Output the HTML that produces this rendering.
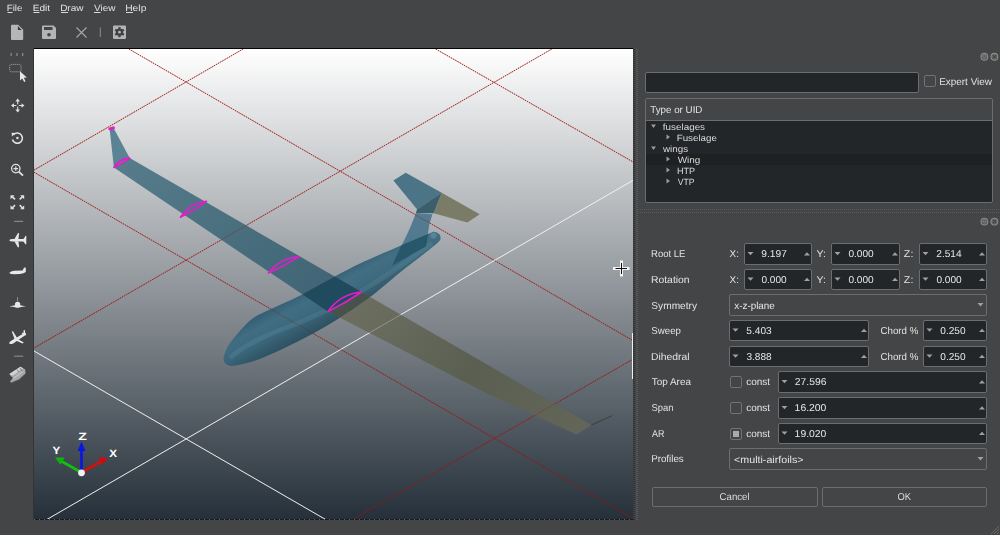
<!DOCTYPE html>
<html><head><meta charset="utf-8"><style>*{box-sizing:border-box;margin:0;padding:0}
html,body{width:1000px;height:535px;overflow:hidden;background:#444547;font-family:"Liberation Sans",sans-serif}
.a{position:absolute}</style></head>
<body>
<div class="a" style="left:33px;top:48px;width:600px;height:472px;background:#2a2c30"></div>
<div class="a" style="left:33px;top:48px;width:600px;height:1px;background:#050505"></div>
<div class="a" style="left:33px;top:48px;width:1px;height:472px;background:#333436"></div>
<div class="a" style="left:34px;top:519px;width:599px;height:1px;background:#141c2c"></div><div class="a" style="left:34px;top:519px;width:599px;height:1px;background-image:linear-gradient(90deg,#b07a30 30%,transparent 30%);background-size:5px 1px;opacity:0.7"></div>
<svg class="a" style="left:34px;top:49px" width="599" height="470" viewBox="34 49 599 470">
<defs>
<linearGradient id="bg" x1="0" y1="0" x2="0" y2="1">
<stop offset="0" stop-color="#ffffff"/>
<stop offset="1" stop-color="#25303a"/>
</linearGradient>
<linearGradient id="fus" gradientUnits="userSpaceOnUse" x1="316" y1="280" x2="339" y2="322">
<stop offset="0" stop-color="#2b586e"/>
<stop offset="0.3" stop-color="#3e6c82"/>
<stop offset="0.55" stop-color="#3a677c"/>
<stop offset="1" stop-color="#254b5b"/>
</linearGradient>
<linearGradient id="wb" gradientUnits="userSpaceOnUse" x1="120" y1="160" x2="340" y2="300">
<stop offset="0" stop-color="#4e7586"/>
<stop offset="0.6" stop-color="#406878"/>
<stop offset="1" stop-color="#3a6072"/>
</linearGradient>
<linearGradient id="wo" gradientUnits="userSpaceOnUse" x1="360" y1="300" x2="590" y2="430">
<stop offset="0" stop-color="#6a6d5d"/>
<stop offset="0.5" stop-color="#5a5e50"/>
<stop offset="1" stop-color="#646757"/>
</linearGradient>
<clipPath id="fclip"><path d="M223.6,360.0 C223.3,357.1 224.9,352.1 227.0,348.0 C229.1,343.9 231.8,340.3 236.0,335.5 C240.2,330.7 246.0,323.5 252.0,319.0 C258.0,314.5 264.3,312.4 272.2,308.6 C280.1,304.8 288.8,301.3 299.1,296.0 C309.4,290.7 323.9,282.4 334.0,277.0 C344.1,271.6 349.0,268.7 360.0,263.5 C371.0,258.3 388.5,251.0 400.0,246.0 C411.5,241.0 423.3,235.9 429.0,233.5 C434.7,231.1 432.3,231.7 434.0,231.8 C435.7,231.9 437.9,233.0 439.0,234.0 C440.1,235.0 440.7,236.6 440.5,238.0 C440.3,239.4 441.4,239.3 438.0,242.5 C434.6,245.7 426.3,252.0 420.0,257.0 C413.7,262.0 405.8,267.8 400.0,272.5 C394.2,277.2 390.0,280.9 385.0,285.0 C380.0,289.1 377.3,291.7 370.0,297.0 C362.7,302.3 350.6,310.9 341.0,317.0 C331.4,323.1 322.4,328.5 312.6,333.8 C302.8,339.1 291.6,344.5 282.3,348.9 C273.0,353.2 264.4,357.2 257.0,359.9 C249.6,362.6 242.7,364.1 238.0,365.0 C233.3,365.9 231.4,366.3 229.0,365.5 C226.6,364.7 223.9,362.9 223.6,360.0 Z"/></clipPath>
</defs>
<rect x="34" y="49" width="599" height="470" fill="url(#bg)"/>
<line x1="128.9" y1="49" x2="633" y2="340.6" stroke="#a01414" stroke-opacity="0.80" stroke-width="1" stroke-dasharray="1.6 0.9"/>
<line x1="34" y1="172.2" x2="633" y2="518.4" stroke="#a01414" stroke-opacity="0.80" stroke-width="1" stroke-dasharray="1.6 0.9"/>
<line x1="435.7" y1="49" x2="633" y2="161.9" stroke="#a01414" stroke-opacity="0.80" stroke-width="1" stroke-dasharray="1.6 0.9"/>
<line x1="243.1" y1="49" x2="34" y2="170.1" stroke="#a01414" stroke-opacity="0.80" stroke-width="1" stroke-dasharray="1.6 0.9"/>
<line x1="551.8" y1="49" x2="34" y2="348" stroke="#a01414" stroke-opacity="0.80" stroke-width="1" stroke-dasharray="1.6 0.9"/>
<line x1="633" y1="359.2" x2="352" y2="520" stroke="#a01414" stroke-opacity="0.80" stroke-width="1" stroke-dasharray="1.6 0.9"/>
<line x1="34" y1="351" x2="326.5" y2="520" stroke="#f2f2f2" stroke-opacity="0.90" stroke-width="1"/>
<line x1="633" y1="180.3" x2="46" y2="520" stroke="#f2f2f2" stroke-opacity="0.90" stroke-width="1"/>
<g id="plane">
<path d="M223.6,360.0 C223.3,357.1 224.9,352.1 227.0,348.0 C229.1,343.9 231.8,340.3 236.0,335.5 C240.2,330.7 246.0,323.5 252.0,319.0 C258.0,314.5 264.3,312.4 272.2,308.6 C280.1,304.8 288.8,301.3 299.1,296.0 C309.4,290.7 323.9,282.4 334.0,277.0 C344.1,271.6 349.0,268.7 360.0,263.5 C371.0,258.3 388.5,251.0 400.0,246.0 C411.5,241.0 423.3,235.9 429.0,233.5 C434.7,231.1 432.3,231.7 434.0,231.8 C435.7,231.9 437.9,233.0 439.0,234.0 C440.1,235.0 440.7,236.6 440.5,238.0 C440.3,239.4 441.4,239.3 438.0,242.5 C434.6,245.7 426.3,252.0 420.0,257.0 C413.7,262.0 405.8,267.8 400.0,272.5 C394.2,277.2 390.0,280.9 385.0,285.0 C380.0,289.1 377.3,291.7 370.0,297.0 C362.7,302.3 350.6,310.9 341.0,317.0 C331.4,323.1 322.4,328.5 312.6,333.8 C302.8,339.1 291.6,344.5 282.3,348.9 C273.0,353.2 264.4,357.2 257.0,359.9 C249.6,362.6 242.7,364.1 238.0,365.0 C233.3,365.9 231.4,366.3 229.0,365.5 C226.6,364.7 223.9,362.9 223.6,360.0 Z" fill="url(#fus)" fill-opacity="0.95"/>
<path d="M230,358 C243,346 263,336 291,326 C322,314 370,290 432,243" stroke="#6a9cb2" stroke-opacity="0.22" stroke-width="5" fill="none" clip-path="url(#fclip)"/>
<polygon points="410,228 416,213 432.4,214.3 429.3,224.6 426,246.3 392.3,265.4" fill="#43718a" fill-opacity="0.85"/>
<polygon points="392.3,265.4 401.3,245.2 428.2,234 426,246.3" fill="#235468" fill-opacity="0.9"/>
<polygon points="393.4,180.4 405.7,172.8 441.7,192.8 417,209.2" fill="#4b7487"/>
<polygon points="441.7,192.8 479.7,214.3 467.4,222.6 433.5,213.3" fill="#7a7c68"/>
<polygon points="417,209.2 441.7,192.8 433.5,213.3 416,213" fill="#3a5e6c"/>
<polygon points="109.6,128.5 113.4,127.8 129.7,158.1 113.9,167.5" fill="#5a8394"/>
<polygon points="113.9,167.5 129.7,158.1 361.5,292 327.9,311.6" fill="url(#wb)" fill-opacity="0.93"/>
<polygon points="113.9,167.5 129.7,158.1 361.5,292 327.9,311.6" fill="#0f3a50" fill-opacity="0.6" clip-path="url(#fclip)"/>
<polygon points="361.5,292 591.5,425 576.5,434.4 486,393 327.9,311.6" fill="url(#wo)" fill-opacity="0.95"/>
<polygon points="361.5,292 591.5,425 576.5,434.4 486,393 327.9,311.6" fill="#23333a" fill-opacity="0.45" clip-path="url(#fclip)"/>
<circle cx="433.5" cy="235.5" r="3" fill="#7fb0c6" fill-opacity="0.35"/>
<line x1="591.5" y1="425" x2="612" y2="415.7" stroke="#3a3f38" stroke-width="1"/>
</g>
<g opacity="0.55"><line x1="128.9" y1="49" x2="633" y2="340.6" stroke="#a01414" stroke-opacity="0.72" stroke-width="1" stroke-dasharray="1.6 0.9"/>
<line x1="34" y1="172.2" x2="633" y2="518.4" stroke="#a01414" stroke-opacity="0.72" stroke-width="1" stroke-dasharray="1.6 0.9"/>
<line x1="435.7" y1="49" x2="633" y2="161.9" stroke="#a01414" stroke-opacity="0.72" stroke-width="1" stroke-dasharray="1.6 0.9"/>
<line x1="243.1" y1="49" x2="34" y2="170.1" stroke="#a01414" stroke-opacity="0.72" stroke-width="1" stroke-dasharray="1.6 0.9"/>
<line x1="551.8" y1="49" x2="34" y2="348" stroke="#a01414" stroke-opacity="0.72" stroke-width="1" stroke-dasharray="1.6 0.9"/>
<line x1="633" y1="359.2" x2="352" y2="520" stroke="#a01414" stroke-opacity="0.72" stroke-width="1" stroke-dasharray="1.6 0.9"/>
<line x1="34" y1="351" x2="326.5" y2="520" stroke="#f2f2f2" stroke-opacity="0.50" stroke-width="1"/>
<line x1="633" y1="180.3" x2="46" y2="520" stroke="#f2f2f2" stroke-opacity="0.50" stroke-width="1"/></g>
<g fill="none" stroke="#e41ccc" stroke-width="1.6" stroke-linejoin="round">
<path d="M109.8,128.9 L113.4,127.9" stroke-width="3" stroke-linecap="round"/>
<path d="M113.9,167.5 Q119.2,158.5 129.7,158.1 Q122.4,163.8 113.9,167.5Z"/>
<path d="M180.4,217.2 Q189.8,203.3 206.5,201.3 Q194.2,210.5 180.4,217.2Z"/>
<path d="M268.5,273 Q280.0,257.8 299,256.7 Q284.5,266.2 268.5,273Z"/>
<path d="M327.9,311.6 Q340.2,294.0 361.5,292 Q345.5,303.1 327.9,311.6Z"/>
</g>
<g id="axes">
<line x1="81.5" y1="472" x2="81.5" y2="449" stroke="#0a14e6" stroke-width="2.6"/>
<polygon points="81.5,441.5 77.6,451 85.4,451" fill="#0a14e6"/>
<line x1="81.5" y1="472.5" x2="61" y2="461" stroke="#12c012" stroke-width="2.6"/>
<polygon points="55,457.6 64.6,457.4 60.4,464.8" fill="#12b012"/>
<line x1="81.5" y1="472.5" x2="102" y2="461" stroke="#d41010" stroke-width="2.6"/>
<polygon points="108,457.6 98.4,457.4 102.6,464.8" fill="#c80e0e"/>
<circle cx="81.5" cy="472.8" r="3.4" fill="#f2f2f2"/>
<g font-family="Liberation Sans" font-weight="bold" font-size="10.5" fill="#fff" text-rendering="geometricPrecision">
<text x="78.3" y="439.8" textLength="8.6" lengthAdjust="spacingAndGlyphs">Z</text>
<text x="52.6" y="453.8" textLength="7.8" lengthAdjust="spacingAndGlyphs">Y</text>
<text x="109.3" y="457.2" textLength="7.8" lengthAdjust="spacingAndGlyphs">X</text>
</g>
</g>
<rect x="632" y="333" width="1.5" height="46" fill="#f0f0f0"/>
<g stroke-linecap="square">
<path d="M621.5,262 L621.5,275 M614.5,268.5 L628,268.5" stroke="#f4f4f4" stroke-width="3"/>
<path d="M621.5,263 L621.5,274 M615.5,268.5 L627,268.5" stroke="#111" stroke-width="1" stroke-linecap="butt"/>
</g>
</svg>
<div class="a" style="left:633px;top:49px;width:2px;height:471px;background-image:linear-gradient(#303133 50%,transparent 50%);background-size:2px 2px"></div>
<div class="a" style="left:636px;top:49px;width:2px;height:471px;background-image:linear-gradient(#58595c 50%,transparent 50%);background-size:2px 2px"></div>
<div class="a" style="left:638px;top:209px;width:362px;height:1px;background-image:linear-gradient(90deg,#56575a 50%,transparent 50%);background-size:2px 1px"></div>
<div class="a" style="left:638px;top:212px;width:362px;height:1px;background-image:linear-gradient(90deg,#5a5b5e 50%,transparent 50%);background-size:2px 1px"></div>
<div class="a" style="left:645px;top:72px;width:274px;height:21px;background:#232629;border:1px solid #6b6d70;border-radius:2px;"></div><div class="a" style="left:924px;top:75px;width:12px;height:12px;background:#444547;border:1px solid #707274;border-radius:2px;"></div><div class="a" style="left:645px;top:98px;width:348px;height:105px;background:#232629;border:1px solid #6b6d70;border-radius:2px;"></div><div class="a" style="left:646px;top:99px;width:346px;height:22px;background:#444547;border-bottom:1px solid #6b6d70"></div><div class="a" style="left:646px;top:154px;width:346px;height:11px;background:#1f2022"></div><div class="a" style="left:744px;top:243px;width:68px;height:22px;background:#232629;border:1px solid #6b6d70;border-radius:2px;"></div><div class="a" style="left:831px;top:243px;width:69px;height:22px;background:#232629;border:1px solid #6b6d70;border-radius:2px;"></div><div class="a" style="left:919px;top:243px;width:68px;height:22px;background:#232629;border:1px solid #6b6d70;border-radius:2px;"></div><div class="a" style="left:744px;top:269px;width:68px;height:21px;background:#232629;border:1px solid #6b6d70;border-radius:2px;"></div><div class="a" style="left:831px;top:269px;width:69px;height:21px;background:#232629;border:1px solid #6b6d70;border-radius:2px;"></div><div class="a" style="left:919px;top:269px;width:68px;height:21px;background:#232629;border:1px solid #6b6d70;border-radius:2px;"></div><div class="a" style="left:729px;top:294px;width:258px;height:22px;background:#444547;border:1px solid #6b6d70;border-radius:2px;"></div><div class="a" style="left:729px;top:320px;width:140px;height:21px;background:#232629;border:1px solid #6b6d70;border-radius:2px;"></div><div class="a" style="left:923px;top:320px;width:64px;height:21px;background:#232629;border:1px solid #6b6d70;border-radius:2px;"></div><div class="a" style="left:729px;top:346px;width:140px;height:21px;background:#232629;border:1px solid #6b6d70;border-radius:2px;"></div><div class="a" style="left:923px;top:346px;width:64px;height:21px;background:#232629;border:1px solid #6b6d70;border-radius:2px;"></div><div class="a" style="left:730px;top:376px;width:12px;height:12px;background:#444547;border:1px solid #707274;border-radius:2px;"></div><div class="a" style="left:778px;top:371px;width:209px;height:22px;background:#232629;border:1px solid #6b6d70;border-radius:2px;"></div><div class="a" style="left:730px;top:402px;width:12px;height:12px;background:#444547;border:1px solid #707274;border-radius:2px;"></div><div class="a" style="left:778px;top:397px;width:209px;height:22px;background:#232629;border:1px solid #6b6d70;border-radius:2px;"></div><div class="a" style="left:730px;top:428px;width:12px;height:12px;background:#444547;border:1px solid #707274;border-radius:2px;"></div><div class="a" style="left:733px;top:431px;width:6px;height:6px;background:#a9a9a9"></div><div class="a" style="left:778px;top:423px;width:209px;height:21px;background:#232629;border:1px solid #6b6d70;border-radius:2px;"></div><div class="a" style="left:729px;top:448px;width:258px;height:22px;background:#444547;border:1px solid #6b6d70;border-radius:2px;"></div><div class="a" style="left:652px;top:487px;width:166px;height:20px;background:#444547;border:1px solid #6b6d70;border-radius:2px;"></div><div class="a" style="left:822px;top:487px;width:165px;height:20px;background:#444547;border:1px solid #6b6d70;border-radius:2px;"></div>
<svg class="a" style="left:0;top:0;will-change:transform" width="1000" height="535" viewBox="0 0 1000 535" font-family="Liberation Sans" text-rendering="geometricPrecision">

<!-- new file -->
<path d="M12,24.8 L18.2,24.8 L23.2,29.8 L23.2,39 Q23.2,40 22.2,40 L12,40 Q11,40 11,39 L11,25.8 Q11,24.8 12,24.8 Z" fill="#b6b6b6"/>
<path d="M17.9,26 L17.9,29.9 L21.6,29.9 Z" fill="#3a3b3d"/>
<!-- save -->
<path d="M42,26.5 Q42,25.5 43,25.5 L53.5,25.5 L56,28 L56,38 Q56,39 55,39 L43,39 Q42,39 42,38 Z" fill="#b4b4b4"/>
<rect x="44" y="27" width="8.5" height="3" fill="#444547"/>
<circle cx="49" cy="34.7" r="1.8" fill="#444547"/>
<!-- close X -->
<path d="M76.5,27.5 L86.5,37.5 M86.5,27.5 L76.5,37.5" stroke="#a8a8a8" stroke-width="1.1"/>
<rect x="99.8" y="27.5" width="1" height="9.5" fill="#7f8fa0"/>
<!-- settings -->
<rect x="113" y="25.5" width="13" height="13.5" rx="1.2" fill="#b4b4b4"/>
<g transform="translate(119.5,32.2)" fill="#3e3f41">
<circle r="3.6"/>
<rect x="-1.1" y="-5" width="2.2" height="10"/>
<rect x="-1.1" y="-5" width="2.2" height="10" transform="rotate(60)"/>
<rect x="-1.1" y="-5" width="2.2" height="10" transform="rotate(120)"/>
<circle r="1.4" fill="#b4b4b4"/>
</g>


<rect x="10.5" y="53" width="1.3" height="3" fill="#7d8b99"/>
<rect x="16.3" y="53" width="1.3" height="3" fill="#7d8b99"/>
<rect x="22" y="53" width="1.3" height="3" fill="#7d8b99"/>
<!-- select -->
<rect x="9.7" y="64.4" width="11.4" height="7.4" rx="1.5" fill="none" stroke="#b0b0b0" stroke-width="0.9" stroke-dasharray="1.1 0.9"/>
<path d="M20,71.2 L20,80.6 L22.3,78.4 L24.1,81.9 L25.5,81.2 L23.8,77.8 L26.8,77.6 Z" fill="#e6e6e6"/>
<!-- move -->
<g stroke="#e0e0e0" stroke-width="1.1" fill="#e0e0e0">
<path d="M12,105.5 L23.5,105.5 M17.7,99.5 L17.7,111.5" fill="none"/>
<path d="M17.7,98.5 L15.4,101.5 L20,101.5Z M17.7,112.5 L15.4,109.5 L20,109.5Z M11,105.5 L14,103.2 L14,107.8Z M24.5,105.5 L21.5,103.2 L21.5,107.8Z" stroke="none"/>
</g>
<circle cx="17.7" cy="105.5" r="1.3" fill="#444547"/>
<!-- rotate -->
<path d="M13.6,134.6 A5.1,5.1 0 1 1 12.4,139.6" fill="none" stroke="#e4e4e4" stroke-width="1.6"/>
<path d="M11.6,132.8 L15.6,133 L12,136.6Z" fill="#e4e4e4"/>
<circle cx="17.4" cy="138" r="1.2" fill="#e4e4e4"/>
<!-- zoom -->
<circle cx="15.8" cy="168.6" r="4.2" fill="none" stroke="#e0e0e0" stroke-width="1.3"/>
<path d="M13.5,168.6 L18.1,168.6 M15.8,166.3 L15.8,170.9" stroke="#e0e0e0" stroke-width="1.1"/>
<path d="M18.8,171.6 L23,175.6" stroke="#e0e0e0" stroke-width="2"/>
<!-- fit -->
<g fill="#e0e0e0">
<path d="M10.5,195.3 L14.5,195.3 L13.3,196.5 L15.6,198.8 L14.4,200 L12.1,197.7 L10.5,199.3Z"/>
<path d="M24.2,195.3 L20.2,195.3 L21.4,196.5 L19.1,198.8 L20.3,200 L22.6,197.7 L24.2,199.3Z"/>
<path d="M10.5,209.3 L14.5,209.3 L13.3,208.1 L15.6,205.8 L14.4,204.6 L12.1,206.9 L10.5,205.3Z"/>
<path d="M24.2,209.3 L20.2,209.3 L21.4,208.1 L19.1,205.8 L20.3,204.6 L22.6,206.9 L24.2,205.3Z"/>
</g>
<rect x="14.2" y="220.8" width="9" height="1.2" fill="#7d8b99"/>
<!-- top view plane -->
<g fill="#e8e8e8">
<path d="M9.2,240.2 Q10,238.9 12.5,238.9 L24.5,238.9 L24.5,241.5 L12.5,241.5 Q10,241.5 9.2,240.2Z"/>
<path d="M14.3,239.2 L18,233 L19.1,233.3 L18.4,239.2Z M14.3,241.2 L18,247.4 L19.1,247.1 L18.4,241.2Z"/>
<path d="M23.2,239.2 Q24.8,237.5 25.5,235.8 L26.3,236.1 L26.3,244.3 L25.5,244.6 Q24.8,242.9 23.2,241.2Z"/>
</g>
<!-- side view plane -->
<g fill="#e8e8e8">
<path d="M9.2,272.9 Q10.5,270.9 14,270.7 L22.6,270.6 L24.1,267.5 L25.8,267.8 L25.8,272 Q24,273.6 20,273.9 L14,274.2 Q10.5,274.2 9.2,272.9Z"/>
</g>
<!-- front view plane -->
<g fill="#e8e8e8">
<path d="M9.2,306.3 Q13,305.6 15,305.2 L15,303.6 Q15.3,301.8 17.6,301.7 Q19.9,301.8 20.2,303.6 L20.2,305.2 Q22,305.6 26,306.3 Q22,307 20,307.2 Q19.2,307.8 17.6,307.8 Q16,307.8 15.2,307.2 Q13,307 9.2,306.3Z"/>
<rect x="17.2" y="297" width="0.8" height="4.8" fill="#9a9a9a"/>
</g>
<!-- iso plane -->
<g fill="#e8e8e8">
<path d="M9,343.2 Q9.3,341.6 12,340.3 L23.5,333.6 Q25.8,332.6 26,333.8 Q26,334.8 24.8,335.6 L13.2,343.4 Q10,344.6 9,343.2Z"/>
<path d="M11.8,331.5 L13,331.2 L17.3,338.2 L14.8,339.8Z"/>
<path d="M15.8,340.6 L18.6,339.4 L23.8,342.4 L22.6,343.4Z"/>
<path d="M23.6,330.2 L24.7,329.8 L25.6,334.2 L23.4,335.2Z"/>
<path d="M21.6,333.6 L22.8,332.4 L26.3,334.6 L25.4,335.6Z"/>
</g>
<rect x="14.2" y="355.6" width="9" height="1.2" fill="#7d8b99"/>
<!-- profile icon -->
<g>
<path d="M9.4,374 L20.4,366.8 L25.1,369.3 L25.6,373.6 L19,379.6 L11.5,382.6 Q9.8,382.2 10.1,381.5 L13,377.8 Q10.5,376.5 9.4,374Z" fill="#a8a8a8"/>
<path d="M9.4,374 L20.4,366.8 L23,368.2 L13,375.5 Q11,375.5 9.4,374Z" fill="#d4d4d4"/>
<path d="M13,377.8 L22,371 L23.5,372 L14,379Z" fill="#bcbcbc"/>
<path d="M17,369.5 L19,372 M20,368 L22,371" stroke="#6a6a6a" stroke-width="0.8"/>
<path d="M25.3,373.5 L19,379.4 L12,382.3" stroke="#6e6e6e" stroke-width="1" stroke-dasharray="0.7 0.7" fill="none"/>
</g>

<rect x="7.5" y="12" width="5" height="1" fill="#d8d8d8"/><rect x="33.5" y="12" width="6" height="1" fill="#d8d8d8"/><rect x="61" y="12" width="7" height="1" fill="#d8d8d8"/><rect x="94" y="12" width="6.5" height="1" fill="#d8d8d8"/><rect x="126" y="12" width="7" height="1" fill="#d8d8d8"/>
<polygon points="651,124.5 656,124.5 653.5,128.0" fill="#9a9a9a"/><polygon points="666.5,134.5 666.5,139.5 670,137.0" fill="#9a9a9a"/><polygon points="651,146.5 656,146.5 653.5,150.0" fill="#9a9a9a"/><polygon points="666.5,156.5 666.5,161.5 670,159.0" fill="#9a9a9a"/><polygon points="666.5,167.5 666.5,172.5 670,170.0" fill="#9a9a9a"/><polygon points="666.5,178.5 666.5,183.5 670,181.0" fill="#9a9a9a"/><polygon points="747.5,252.0 753.5,252.0 750.5,255.2" fill="#a0a0a0"/><polygon points="804,255.5 810,255.5 807,252.2" fill="#a0a0a0"/><polygon points="834.5,252.0 840.5,252.0 837.5,255.2" fill="#a0a0a0"/><polygon points="892,255.5 898,255.5 895,252.2" fill="#a0a0a0"/><polygon points="922.5,252.0 928.5,252.0 925.5,255.2" fill="#a0a0a0"/><polygon points="979,255.5 985,255.5 982,252.2" fill="#a0a0a0"/><polygon points="747.5,277.5 753.5,277.5 750.5,280.7" fill="#a0a0a0"/><polygon points="804,281.0 810,281.0 807,277.7" fill="#a0a0a0"/><polygon points="834.5,277.5 840.5,277.5 837.5,280.7" fill="#a0a0a0"/><polygon points="892,281.0 898,281.0 895,277.7" fill="#a0a0a0"/><polygon points="922.5,277.5 928.5,277.5 925.5,280.7" fill="#a0a0a0"/><polygon points="979,281.0 985,281.0 982,277.7" fill="#a0a0a0"/><polygon points="977.5,303.0 983.5,303.0 980.5,306.5" fill="#a0a0a0"/><polygon points="732.5,328.5 738.5,328.5 735.5,331.7" fill="#a0a0a0"/><polygon points="861,332.0 867,332.0 864,328.7" fill="#a0a0a0"/><polygon points="926.5,328.5 932.5,328.5 929.5,331.7" fill="#a0a0a0"/><polygon points="979,332.0 985,332.0 982,328.7" fill="#a0a0a0"/><polygon points="732.5,354.5 738.5,354.5 735.5,357.7" fill="#a0a0a0"/><polygon points="861,358.0 867,358.0 864,354.7" fill="#a0a0a0"/><polygon points="926.5,354.5 932.5,354.5 929.5,357.7" fill="#a0a0a0"/><polygon points="979,358.0 985,358.0 982,354.7" fill="#a0a0a0"/><polygon points="781.5,380.0 787.5,380.0 784.5,383.2" fill="#a0a0a0"/><polygon points="979,383.5 985,383.5 982,380.2" fill="#a0a0a0"/><polygon points="781.5,406.0 787.5,406.0 784.5,409.2" fill="#a0a0a0"/><polygon points="979,409.5 985,409.5 982,406.2" fill="#a0a0a0"/><polygon points="781.5,431.5 787.5,431.5 784.5,434.7" fill="#a0a0a0"/><polygon points="979,435.0 985,435.0 982,431.7" fill="#a0a0a0"/><polygon points="977.5,457.0 983.5,457.0 980.5,460.5" fill="#a0a0a0"/>
<circle cx="984.4" cy="56.8" r="3.4" fill="#58595b" stroke="#8c8c8c" stroke-width="1.1"/><path d="M982.6,56.199999999999996 L984.4,54.599999999999994 L986.2,56.199999999999996 L984.4,58.4 Z" fill="none" stroke="#8c8c8c" stroke-width="0.8"/><circle cx="994.4" cy="56.8" r="3.4" fill="#606163" stroke="#8c8c8c" stroke-width="1.1"/><path d="M992.8,55.199999999999996 L996,58.4 M996,55.199999999999996 L992.8,58.4" stroke="#3c3d3f" stroke-width="1"/>
<path d='M991,534 L999,526 M994,534 L999,529 M997,534 L999,532' stroke='#6a6b6e' stroke-width='1'/>
<circle cx="984.4" cy="221.6" r="3.4" fill="#58595b" stroke="#8c8c8c" stroke-width="1.1"/><path d="M982.6,221.0 L984.4,219.4 L986.2,221.0 L984.4,223.2 Z" fill="none" stroke="#8c8c8c" stroke-width="0.8"/><circle cx="994.4" cy="221.6" r="3.4" fill="#606163" stroke="#8c8c8c" stroke-width="1.1"/><path d="M992.8,220.0 L996,223.2 M996,220.0 L992.8,223.2" stroke="#3c3d3f" stroke-width="1"/>
<text x="6.70" y="10.5" font-size="9" fill="#e2e2e2" font-weight="normal" textLength="15.73" lengthAdjust="spacingAndGlyphs">File</text><text x="32.67" y="10.5" font-size="9" fill="#e2e2e2" font-weight="normal" textLength="17.40" lengthAdjust="spacingAndGlyphs">Edit</text><text x="60.18" y="10.5" font-size="9" fill="#e2e2e2" font-weight="normal" textLength="23.29" lengthAdjust="spacingAndGlyphs">Draw</text><text x="93.96" y="10.5" font-size="9" fill="#e2e2e2" font-weight="normal" textLength="21.51" lengthAdjust="spacingAndGlyphs">View</text><text x="125.15" y="10.5" font-size="9" fill="#e2e2e2" font-weight="normal" textLength="21.27" lengthAdjust="spacingAndGlyphs">Help</text><text x="939.19" y="85.0" font-size="10" fill="#e0e0e0" font-weight="normal" textLength="52.79" lengthAdjust="spacingAndGlyphs">Expert View</text><text x="650.28" y="113.0" font-size="10" fill="#e2e2e2" font-weight="normal" textLength="52.17" lengthAdjust="spacingAndGlyphs">Type or UID</text><text x="662.86" y="129.5" font-size="9" fill="#dadada" font-weight="normal" textLength="42.19" lengthAdjust="spacingAndGlyphs">fuselages</text><text x="676.70" y="140.5" font-size="9" fill="#dadada" font-weight="normal" textLength="40.23" lengthAdjust="spacingAndGlyphs">Fuselage</text><text x="663.00" y="151.5" font-size="9" fill="#dadada" font-weight="normal" textLength="25.03" lengthAdjust="spacingAndGlyphs">wings</text><text x="677.66" y="162.5" font-size="9" fill="#dadada" font-weight="normal" textLength="22.68" lengthAdjust="spacingAndGlyphs">Wing</text><text x="676.95" y="173.5" font-size="9" fill="#dadada" font-weight="normal" textLength="18.22" lengthAdjust="spacingAndGlyphs">HTP</text><text x="677.67" y="184.5" font-size="9" fill="#dadada" font-weight="normal" textLength="16.78" lengthAdjust="spacingAndGlyphs">VTP</text><text x="651.02" y="257.2" font-size="10" fill="#e2e2e2" font-weight="normal" textLength="34.38" lengthAdjust="spacingAndGlyphs">Root LE</text><text x="650.95" y="283.0" font-size="10" fill="#e2e2e2" font-weight="normal" textLength="38.72" lengthAdjust="spacingAndGlyphs">Rotation</text><text x="729.58" y="257.2" font-size="10" fill="#e2e2e2" font-weight="normal" textLength="9.31" lengthAdjust="spacingAndGlyphs">X:</text><text x="761.33" y="257.3" font-size="10" fill="#e6e6e6" font-weight="normal" textLength="25.48" lengthAdjust="spacingAndGlyphs">9.197</text><text x="816.57" y="257.2" font-size="10" fill="#e2e2e2" font-weight="normal" textLength="9.39" lengthAdjust="spacingAndGlyphs">Y:</text><text x="848.41" y="257.3" font-size="10" fill="#e6e6e6" font-weight="normal" textLength="25.28" lengthAdjust="spacingAndGlyphs">0.000</text><text x="903.87" y="257.2" font-size="10" fill="#e2e2e2" font-weight="normal" textLength="9.50" lengthAdjust="spacingAndGlyphs">Z:</text><text x="936.29" y="257.3" font-size="10" fill="#e6e6e6" font-weight="normal" textLength="25.30" lengthAdjust="spacingAndGlyphs">2.514</text><text x="729.58" y="283.2" font-size="10" fill="#e2e2e2" font-weight="normal" textLength="9.31" lengthAdjust="spacingAndGlyphs">X:</text><text x="761.41" y="283.3" font-size="10" fill="#e6e6e6" font-weight="normal" textLength="25.28" lengthAdjust="spacingAndGlyphs">0.000</text><text x="816.57" y="283.2" font-size="10" fill="#e2e2e2" font-weight="normal" textLength="9.39" lengthAdjust="spacingAndGlyphs">Y:</text><text x="848.41" y="283.3" font-size="10" fill="#e6e6e6" font-weight="normal" textLength="25.28" lengthAdjust="spacingAndGlyphs">0.000</text><text x="903.87" y="283.2" font-size="10" fill="#e2e2e2" font-weight="normal" textLength="9.50" lengthAdjust="spacingAndGlyphs">Z:</text><text x="936.41" y="283.3" font-size="10" fill="#e6e6e6" font-weight="normal" textLength="25.28" lengthAdjust="spacingAndGlyphs">0.000</text><text x="651.34" y="308.5" font-size="10" fill="#e2e2e2" font-weight="normal" textLength="45.68" lengthAdjust="spacingAndGlyphs">Symmetry</text><text x="734.29" y="309.1" font-size="10" fill="#e6e6e6" font-weight="normal" textLength="40.54" lengthAdjust="spacingAndGlyphs">x-z-plane</text><text x="651.37" y="334.0" font-size="10" fill="#e2e2e2" font-weight="normal" textLength="29.54" lengthAdjust="spacingAndGlyphs">Sweep</text><text x="746.39" y="334.3" font-size="10" fill="#e6e6e6" font-weight="normal" textLength="25.35" lengthAdjust="spacingAndGlyphs">5.403</text><text x="880.51" y="334.0" font-size="10" fill="#e2e2e2" font-weight="normal" textLength="37.83" lengthAdjust="spacingAndGlyphs">Chord %</text><text x="940.31" y="334.3" font-size="10" fill="#e6e6e6" font-weight="normal" textLength="25.28" lengthAdjust="spacingAndGlyphs">0.250</text><text x="650.95" y="359.7" font-size="10" fill="#e2e2e2" font-weight="normal" textLength="38.53" lengthAdjust="spacingAndGlyphs">Dihedral</text><text x="746.42" y="360.3" font-size="10" fill="#e6e6e6" font-weight="normal" textLength="25.32" lengthAdjust="spacingAndGlyphs">3.888</text><text x="880.51" y="359.7" font-size="10" fill="#e2e2e2" font-weight="normal" textLength="37.83" lengthAdjust="spacingAndGlyphs">Chord %</text><text x="940.31" y="360.3" font-size="10" fill="#e6e6e6" font-weight="normal" textLength="25.28" lengthAdjust="spacingAndGlyphs">0.250</text><text x="651.78" y="385.1" font-size="10" fill="#e2e2e2" font-weight="normal" textLength="39.21" lengthAdjust="spacingAndGlyphs">Top Area</text><text x="746.18" y="384.8" font-size="10" fill="#e2e2e2" font-weight="normal" textLength="23.89" lengthAdjust="spacingAndGlyphs">const</text><text x="794.88" y="385.3" font-size="10" fill="#e6e6e6" font-weight="normal" textLength="31.57" lengthAdjust="spacingAndGlyphs">27.596</text><text x="651.58" y="411.1" font-size="10" fill="#e2e2e2" font-weight="normal" textLength="22.03" lengthAdjust="spacingAndGlyphs">Span</text><text x="746.18" y="410.8" font-size="10" fill="#e2e2e2" font-weight="normal" textLength="23.89" lengthAdjust="spacingAndGlyphs">const</text><text x="794.61" y="411.3" font-size="10" fill="#e6e6e6" font-weight="normal" textLength="31.79" lengthAdjust="spacingAndGlyphs">16.200</text><text x="651.98" y="437.1" font-size="10" fill="#e2e2e2" font-weight="normal" textLength="12.43" lengthAdjust="spacingAndGlyphs">AR</text><text x="746.18" y="436.8" font-size="10" fill="#e2e2e2" font-weight="normal" textLength="23.89" lengthAdjust="spacingAndGlyphs">const</text><text x="794.61" y="437.3" font-size="10" fill="#e6e6e6" font-weight="normal" textLength="31.79" lengthAdjust="spacingAndGlyphs">19.020</text><text x="651.20" y="462.4" font-size="10" fill="#e2e2e2" font-weight="normal" textLength="32.55" lengthAdjust="spacingAndGlyphs">Profiles</text><text x="734.08" y="463.1" font-size="10" fill="#e6e6e6" font-weight="normal" textLength="69.44" lengthAdjust="spacingAndGlyphs">&lt;multi-airfoils&gt;</text><text x="719.52" y="500.4" font-size="10" fill="#dcdcdc" font-weight="normal" textLength="30.12" lengthAdjust="spacingAndGlyphs">Cancel</text><text x="897.56" y="500.4" font-size="10" fill="#dcdcdc" font-weight="normal" textLength="13.54" lengthAdjust="spacingAndGlyphs">OK</text>
</svg>
</body></html>
